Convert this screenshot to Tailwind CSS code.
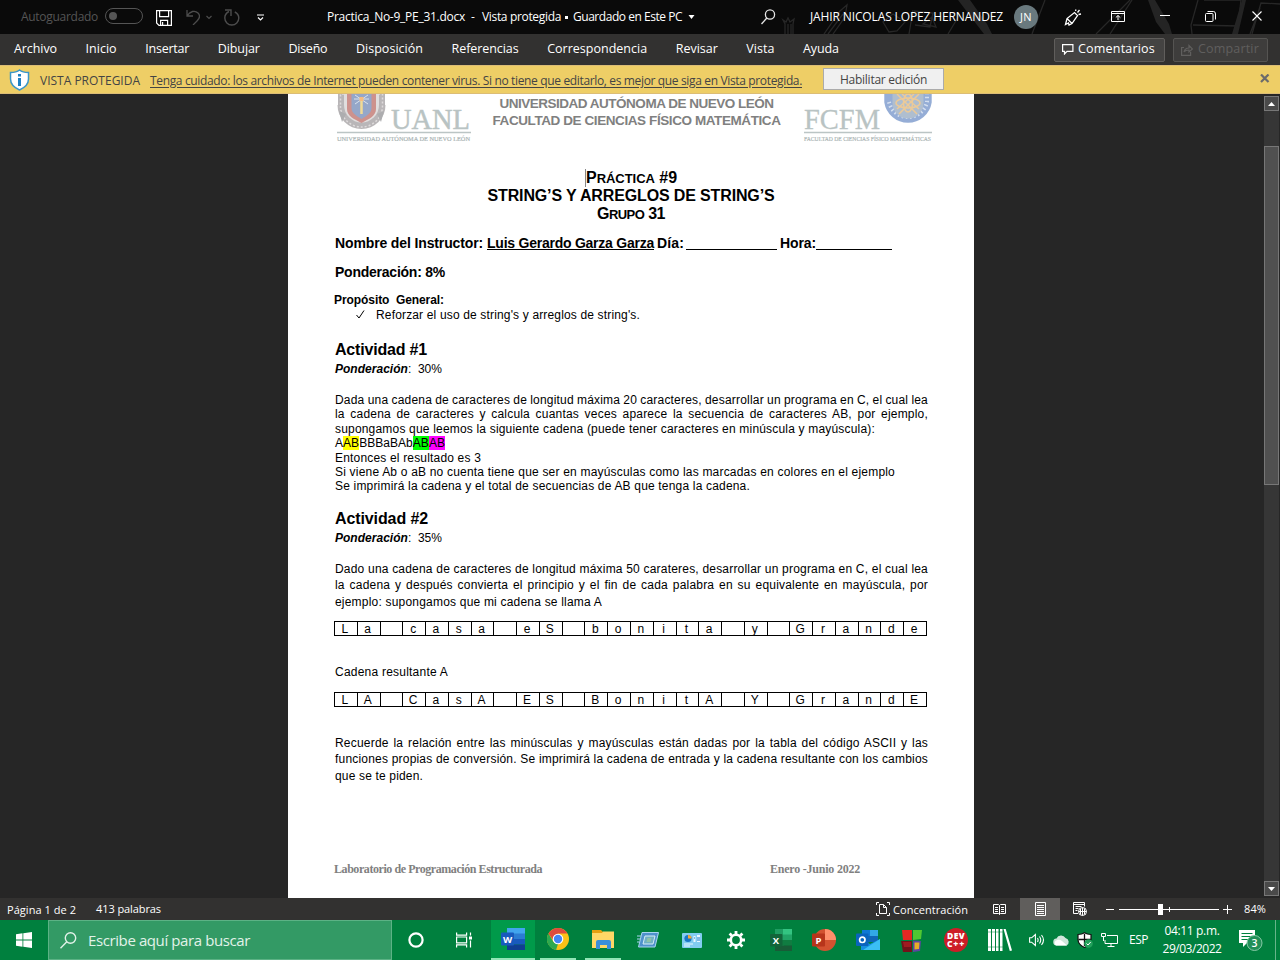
<!DOCTYPE html>
<html lang="es">
<head>
<meta charset="utf-8">
<title>Practica_No-9_PE_31.docx</title>
<script src="https://cdn.jsdelivr.net/npm/@tailwindcss/browser@4"></script>
</head>
<body class="w-[1280px] h-[960px] overflow-hidden flex flex-col bg-[#262626] font-['Open_Sans','Noto_Sans',sans-serif] text-[12px]">

<!-- Title bar -->
<header class="relative h-[34px] shrink-0 bg-[#0a0a0a] text-white flex items-center pl-[21px]">
  <svg class="absolute left-[770px] top-0" width="510" height="34" fill="none" stroke="#272727" stroke-width="1.3">
    <path d="M15 34v-10l-2-4 3 2 2-4 2 4 4-3-1 5v10M18 34v-10M21 34v-10M54 34l16-23 7-6-2 12-12 17M58 34l15-20M113 22l10-8 12 8-8 9-8 1zM143 10l-4 24M144 11l19 2-3 14-15-2M153 24l9-7 4 10zM178 34l12-20M275 0l-13 34M326 34l34-34M340 34l22-34M428 0l-7 25 1 9M434 0h37l-3 26-45-1M510 4l-19-1-9 31M490 8l-10 26"/>
    <path d="M188 0h12l17 24 5 10h-8l-7-9zM378 0h7l14 24 3 10h-7l-9-12zM472 0h4l-8 34h-6z" fill="#242424" stroke="none"/>
  </svg>
  <span class="text-[#555] whitespace-nowrap" data-w="77">Autoguardado</span>
  <div class="relative ml-[7px] w-[38px] h-4 -mt-[2px] rounded-full border border-[#555] flex items-center pl-[3px]"><div class="size-2 rounded-full bg-[#555]"></div></div>
  <svg class="ml-[13px] mt-[2px]" width="16" height="16" fill="none" stroke="#fff" stroke-width="1.2"><path d="M.6.6h14.8v14.8H3L.6 13zM3.600.6v6h9v-6M4.600 15.400v-5h7v5M6.600 12v3"/></svg>
  <svg class="ml-[14px]" width="14" height="16" fill="none" stroke="#4d4d4d" stroke-width="1.3"><path d="M1 1v6h6M1 7C4 2 9 1 12 4s1 6-1 8l-4 4"/></svg>
  <svg class="ml-[6px]" width="6" height="5" fill="none" stroke="#4d4d4d" stroke-width="1.2"><path d="M.5 1 3 3.500 5.500 1"/></svg>
  <svg class="ml-[12px]" width="16" height="17" fill="none" stroke="#4d4d4d" stroke-width="1.4"><path d="M1 1h6v6M5 2.500C2 4 .8 6 .8 9a7 7 0 0 0 14 0c0-3-1.800-5-4-6"/></svg>
  <svg class="ml-[17px]" width="8" height="7" fill="none" stroke="#fff" stroke-width="1.200"><path d="M0 1h7M1 3.500 3.500 6 6 3.500"/></svg>
  <span class="ml-[62px] whitespace-nowrap" data-w="138">Practica_No-9_PE_31.docx</span>
  <span class="ml-[6px]" data-w="4">-</span>
  <span class="ml-[7px] whitespace-nowrap" data-w="79">Vista protegida</span>
  <i class="ml-[4px] size-[3px] bg-white"></i>
  <span class="ml-[5px] whitespace-nowrap" data-w="109">Guardado en Este PC</span>
  <svg class="ml-[6px]" width="7" height="5" fill="#fff"><path d="M.5 0h6L3.500 4z"/></svg>
  <svg class="ml-[66px]" width="15" height="16" fill="none" stroke="#e6e6e6" stroke-width="1.300"><circle cx="9" cy="5.500" r="4.600"/><path d="M5.800 9 .5 15"/></svg>
  <span class="relative ml-[34px] whitespace-nowrap" data-w="193">JAHIR NICOLAS LOPEZ HERNANDEZ</span>
  <div class="relative ml-[11px] size-6 rounded-full bg-[#69797e] flex items-center justify-center text-[11px]"><span data-w="12">JN</span></div>
  <svg class="relative ml-[26px]" width="18" height="17" fill="none" stroke="#fff" stroke-width="1.300"><path d="M1.500 15.500 3 9.500l7.500-6 3 3-5.500 8-3 1.500-.5-2zM3 9.500l5 5M11.500 2l.5-1.500M13.500 3.500 15.500 1M14.500 5.500l2.500-.5"/></svg>
  <svg class="relative ml-[29px] -mt-[2px]" width="14" height="11" fill="none" stroke="#fff"><path d="M.5.5h13v10H.5zM.5 2.500h13M7 9V4.500M4.800 6.500 7 4.500l2.200 2"/></svg>
  <i class="relative ml-[35px] -mt-[3px] w-[10px] h-px bg-white"></i>
  <svg class="relative ml-[35px] -mt-[2px]" width="11" height="11" fill="none" stroke="#fff"><rect x=".5" y="2.500" width="7.500" height="8" rx="1"/><path d="M2.500.5h6Q10.500.5 10.500 3v5.500"/></svg>
  <svg class="relative ml-[36px] -mt-[2px]" width="10" height="10" stroke="#fff" stroke-width="1.100"><path d="m.5.5 9 9M9.500.5l-9 9"/></svg>
</header>

<!-- Ribbon tabs -->
<nav class="h-[31px] shrink-0 bg-[#323130] text-white text-[12.5px] flex items-center pl-[14px] whitespace-nowrap">
  <div class="flex gap-[28.6px]">
    <span data-w="43">Archivo</span><span data-w="31">Inicio</span><span data-w="44">Insertar</span><span data-w="42">Dibujar</span><span data-w="39">Diseño</span><span data-w="67">Disposición</span><span data-w="67">Referencias</span><span data-w="100">Correspondencia</span><span data-w="42">Revisar</span><span data-w="28">Vista</span><span data-w="36">Ayuda</span>
  </div>
  <div class="ml-auto mr-[12px] flex gap-[8px]">
    <div class="w-[111px] h-6 rounded-[2px] border border-[#605e5c] bg-[#444342] flex items-center pl-[7px]">
      <svg width="12" height="11" fill="none" stroke="#fff" stroke-width="1.200"><path d="M.6.6h10.300v6.800H5L2.500 10V7.400H.6z"/></svg>
      <span class="ml-[4px]" data-w="77">Comentarios</span>
    </div>
    <div class="w-[95px] h-6 rounded-[2px] border border-[#555452] bg-[#3e3d3c] text-[#605f5e] flex items-center pl-[7px]">
      <svg width="12" height="12" fill="none" stroke="#605f5e" stroke-width="1.200"><path d="M3 3.500H.6v7.900h9V8M3 8c.5-3 2.500-4 5-4V1.500L11.500 5 8 8V6C6 6 4 6.500 3 8z"/></svg>
      <span class="ml-[5px]" data-w="61">Compartir</span>
    </div>
  </div>
</nav>

<!-- Protected view bar -->
<div class="h-[29px] shrink-0 bg-[#eece66] border-y border-t-[#dcbd75] border-b-[#dcbd75] text-[#444] flex items-center pl-[9px] whitespace-nowrap">
  <svg width="21" height="22" viewBox="0 0 21 22"><path d="M10.500 1C8 3 5 3.500 1.500 3.500V10c0 5 3.500 8.500 9 11 5.500-2.500 9-6 9-11V3.500C16 3.500 13 3 10.500 1z" fill="#fff" stroke="#3a96c8" stroke-width="1.500"/><path d="M9 9h3v8H9zM9 5h3v2.500H9z" fill="#1e81c4"/></svg>
  <span class="ml-[10px] mt-[2px]" data-w="100">VISTA PROTEGIDA</span>
  <span class="ml-[10px] mt-[2px] underline underline-offset-2" data-w="652">Tenga cuidado: los archivos de Internet pueden contener virus. Si no tiene que editarlo, es mejor que siga en Vista protegida.</span>
  <div class="ml-[21px] w-[121px] h-[22px] -mt-[2px] pt-[2px] border border-[#ababab] bg-[#f0f0f0] flex items-center justify-center"><span data-w="87">Habilitar edición</span></div>
  <svg class="ml-auto mr-[10px] -mt-[2px]" width="10" height="9" stroke="#6b6b6b" stroke-width="2.200"><path d="m1 .5 7.500 7.500M8.500.5 1 8"/></svg>
</div>

<!-- Document workspace -->
<main class="h-[804px] shrink-0 flex overflow-hidden">
  <article class="ml-[288px] w-[686px] h-[804px] bg-white text-black font-['Liberation_Sans',Arial,sans-serif] pl-[47px] whitespace-nowrap text-[12px] leading-[14px]">
    <div class="flex h-[75px] text-[#808080] font-bold text-[13.500px] leading-[17px]">
      <svg width="137" height="58" class="opacity-60 overflow-visible" font-family="Liberation Serif, serif">
        <path d="M2.500 0A24 24 0 1 0 50.500 0z" transform="translate(0 11)" fill="#8c8789"/><path d="M3 0h47v12H3z" fill="#8c8789"/>
        <path d="M5.500 12a21 21 0 0 0 42 0V0h-42z" fill="none" stroke="#c9c4c5" stroke-dasharray="2 2" stroke-width="1.500"/>
        <path d="M9 0h35v11a17.500 17.500 0 0 1-35 0z" fill="#cdc9c9"/>
        <path d="M12 0h29v15c0 7-7 10-14.500 14C19 25 12 22 12 15z" fill="#ad4a43"/><path d="M16.500 0h20v14c0 5-5 8-10 11-5-3-10-6-10-11z" fill="#4f6ea6"/>
        <path d="M26.500 6v14" stroke="#e9c34c" stroke-width="2.500"/><path d="M20 1l13 9M33 1l-13 9M19 5h15" stroke="#c3cfe0"/><path d="M24.500 3h4v4h-4z" fill="#f0902f"/>
        <path d="m4 17 7 3-4 8zM49 17l-7 3 4 8z" fill="#77777b"/>
        <text x="56" y="35" font-size="30" font-weight="400" fill="#8b9c9c" stroke="#8b9c9c" stroke-width=".5" textLength="79" lengthAdjust="spacingAndGlyphs">UANL</text>
        <path d="M2 38.500h134" stroke="#8fa0a0" stroke-width="1.500"/>
        <text x="2" y="47" font-size="6.500" font-weight="400" fill="#708282" stroke="#708282" stroke-width=".2" textLength="133" lengthAdjust="spacingAndGlyphs">UNIVERSIDAD AUTÓNOMA DE NUEVO LEÓN</text>
      </svg>
      <div class="w-[331px] pt-[1px] flex flex-col items-center pr-[2px]"><span data-w="274">UNIVERSIDAD AUTÓNOMA DE NUEVO LEÓN</span><span data-w="288">FACULTAD DE CIENCIAS FÍSICO MATEMÁTICA</span></div>
      <svg width="131" height="58" class="opacity-60 overflow-visible" font-family="Liberation Serif, serif">
        <path d="M81.300 8.500V0h47.400v8.500a24 24 0 0 1-47.400 0z" fill="#4f78bb"/><path d="M86 8a19.500 19.500 0 0 0 38 0V0" fill="none" stroke="#b9cbe6" stroke-dasharray="1.500 2.500" stroke-width="4"/><path d="M89.500 0h31v9a15.500 15.500 0 0 1-31 0z" fill="#7b93b0"/>
        <g fill="none" stroke="#e0a855" stroke-width="1.500"><ellipse cx="105" cy="9" rx="4.500" ry="9"/><ellipse cx="105" cy="9" rx="12" ry="5"/><path d="M94 0l20 20M116 0 96 20M99 0l17 15M111 0 94 15"/></g>
        <text x="1" y="35" font-size="30" font-weight="400" fill="#8b9c9c" stroke="#8b9c9c" stroke-width=".3" textLength="76" lengthAdjust="spacingAndGlyphs">FCFM</text>
        <path d="M1 38.500h128" stroke="#8fa0a0" stroke-width="1.500"/>
        <text x="1" y="47" font-size="6.500" font-weight="400" fill="#708282" stroke="#708282" stroke-width=".2" textLength="127" lengthAdjust="spacingAndGlyphs">FACULTAD DE CIENCIAS FÍSICO MATEMÁTICAS</text>
      </svg>
    </div>
    <div class="w-[592px] flex flex-col items-center font-bold text-[16px] leading-[18px]">
      <div class="h-[18px] border-l border-[#888]"><span data-w="91">P<span class="text-[13px]">RÁCTICA</span> #9</span></div>
      <span data-w="287" class="h-[18px] font-bold">STRING’S Y ARREGLOS DE STRING’S</span>
      <div class="h-[18px]"><span data-w="68">G<span class="text-[13px]">RUPO</span> 31</span></div>
    </div>
    <div class="mt-[12px] h-4 flex text-[14px] leading-4 font-bold">
      <span data-w="148">Nombre del Instructor:</span><span class="ml-[4px] underline" data-w="167">Luis Gerardo Garza Garza</span><span class="ml-[3px]" data-w="27">Día:</span><i class="ml-[2px] w-[91px] h-[15px] border-b border-black"></i><span class="ml-[3px]" data-w="36">Hora:</span><i class="w-[76px] h-[15px] border-b border-black"></i>
    </div>
    <div class="mt-[13px] h-4 text-[14px] leading-4 font-bold"><span data-w="110">Ponderación: 8%</span></div>
    <div class="mt-[13px] h-[14px] -ml-px font-bold"><span data-w="110">Propósito&nbsp; General:</span></div>
    <div class="mt-px h-[14px] pl-[21px] flex"><svg class="mt-[2px]" width="9" height="9" fill="none" stroke="#000"><path d="m.5 5 2.500 3 5-7.500"/></svg><span class="ml-[11px]" data-w="264">Reforzar el uso de string's y arreglos de string's.</span></div>

    <div class="mt-[19px] h-[18px] text-[16px] leading-[18px] font-bold"><span data-w="92">Actividad #1</span></div>
    <div class="mt-[3px] h-[14px]"><span data-w="107"><b class="italic">Ponderación</b>:&nbsp; 30%</span></div>
    <div class="mt-[17px] h-[14px]"><span data-j="593">Dada una cadena de caracteres de longitud máxima 20 caracteres, desarrollar un programa en C, el cual lea</span></div>
    <div class="h-[14px]"><span data-j="593">la cadena de caracteres y calcula cuantas veces aparece la secuencia de caracteres AB, por ejemplo,</span></div>
    <div class="mt-px h-[14px]"><span data-w="540">supongamos que leemos la siguiente cadena (puede tener caracteres en minúscula y mayúscula):</span></div>
    <div class="h-[14px]"><span data-w="110">A<mark class="bg-[#ff0]">AB</mark>BBBaBAb<mark class="bg-[#0f0]">AB</mark><mark class="bg-[#f0f]">AB</mark></span></div>
    <div class="mt-px h-[14px]"><span data-w="146">Entonces el resultado es 3</span></div>
    <div class="h-[14px]"><span data-w="560">Si viene Ab o aB no cuenta tiene que ser en mayúsculas como las marcadas en colores en el ejemplo</span></div>
    <div class="h-[14px]"><span data-w="415">Se imprimirá la cadena y el total de secuencias de AB que tenga la cadena.</span></div>

    <div class="mt-[17px] h-[18px] text-[16px] leading-[18px] font-bold"><span data-w="93">Actividad #2</span></div>
    <div class="mt-[3px] h-[14px]"><span data-w="107"><b class="italic">Ponderación</b>:&nbsp; 35%</span></div>
    <div class="mt-[17px] h-[14px]"><span data-j="593">Dado una cadena de caracteres de longitud máxima 50 carateres, desarrollar un programa en C, el cual lea</span></div>
    <div class="mt-[2px] h-[14px]"><span data-j="593">la cadena y después convierta el principio y el fin de cada palabra en su equivalente en mayúscula, por</span></div>
    <div class="mt-[3px] h-[14px]"><span data-w="267">ejemplo: supongamos que mi cadena se llama A</span></div>
    <div class="mt-[12px] -ml-px w-[593px] h-[15px] grid grid-cols-[repeat(26,minmax(0,1fr))] border-y border-r border-black text-center leading-[14px] *:border-l *:border-black *:pr-[2px]">
      <i class="not-italic">L</i><i class="not-italic">a</i><i></i><i class="not-italic">c</i><i class="not-italic">a</i><i class="not-italic">s</i><i class="not-italic">a</i><i></i><i class="not-italic">e</i><i class="not-italic">S</i><i></i><i class="not-italic">b</i><i class="not-italic">o</i><i class="not-italic">n</i><i class="not-italic">i</i><i class="not-italic">t</i><i class="not-italic">a</i><i></i><i class="not-italic">y</i><i></i><i class="not-italic">G</i><i class="not-italic">r</i><i class="not-italic">a</i><i class="not-italic">n</i><i class="not-italic">d</i><i class="not-italic">e</i>
    </div>
    <div class="mt-[29px] h-[14px]"><span data-w="113">Cadena resultante A</span></div>
    <div class="mt-[13px] -ml-px w-[593px] h-[15px] grid grid-cols-[repeat(26,minmax(0,1fr))] border-y border-r border-black text-center leading-[14px] *:border-l *:border-black *:pr-[2px]">
      <i class="not-italic">L</i><i class="not-italic">A</i><i></i><i class="not-italic">C</i><i class="not-italic">a</i><i class="not-italic">s</i><i class="not-italic">A</i><i></i><i class="not-italic">E</i><i class="not-italic">S</i><i></i><i class="not-italic">B</i><i class="not-italic">o</i><i class="not-italic">n</i><i class="not-italic">i</i><i class="not-italic">t</i><i class="not-italic">A</i><i></i><i class="not-italic">Y</i><i></i><i class="not-italic">G</i><i class="not-italic">r</i><i class="not-italic">a</i><i class="not-italic">n</i><i class="not-italic">d</i><i class="not-italic">E</i>
    </div>
    <div class="mt-[29px] h-[14px]"><span data-j="593">Recuerde la relación entre las minúsculas y mayúsculas están dadas por la tabla del código ASCII y las</span></div>
    <div class="mt-[2px] h-[14px]"><span data-j="593">funciones propias de conversión. Se imprimirá la cadena de entrada y la cadena resultante con los cambios</span></div>
    <div class="mt-[3px] h-[14px]"><span data-w="88">que se te piden.</span></div>
    <div class="mt-[79px] -ml-px flex font-bold text-[#808080] font-['Liberation_Serif','Times_New_Roman',serif]"><span data-w="208">Laboratorio de Programación Estructurada</span><span class="ml-[228px]" data-w="90">Enero -Junio 2022</span></div>
  </article>

  <div class="ml-auto mr-px mt-[2px] mb-[2px] w-[15px] flex flex-col bg-[#363636]">
    <div class="h-[15px] border border-[#777] bg-[#4a4a4a] flex items-center justify-center"><svg width="7" height="4" fill="#fff"><path d="M0 4h7L3.500 0z"/></svg></div>
    <div class="mt-[35px] h-[339px] border border-[#777] bg-[#505050]"></div>
    <div class="mt-auto h-[15px] border border-[#777] bg-[#4a4a4a] flex items-center justify-center"><svg width="7" height="4" fill="#fff"><path d="M0 0h7L3.500 4z"/></svg></div>
  </div>
</main>

<!-- Word status bar -->
<div class="h-[22px] shrink-0 bg-[#323130] text-white text-[11px] flex items-center pl-[7px] whitespace-nowrap">
  <span class="mt-[2px]" data-w="69">Página 1 de 2</span><span class="ml-[20px]" data-w="65">413 palabras</span>
  <svg class="ml-[715px]" width="14" height="14" fill="none" stroke="#fff"><path d="M3 .5H.5V3M11 .5h2.500V3M.5 11v2.500H3M13.500 11v2.500H11M3.500 2.500h4l3 3v6h-7zM7.500 2.500v3h3"/></svg>
  <span class="ml-[3px] mt-[2px]" data-w="75">Concentración</span>
  <svg class="ml-[25px]" width="13" height="13" fill="none" stroke="#fff"><path d="M.5 1.500h5l1 1 1-1h5v9h-5l-1 1-1-1h-5zM6.500 2.500v9M2 4.500h3M2 6.500h3M2 8.500h3M8 4.500h3M8 6.500h3M8 8.500h3"/></svg>
  <div class="ml-[14px] w-10 h-[22px] bg-[#605e5c] flex items-center justify-center"><svg width="11" height="14" fill="none" stroke="#fff"><path d="M.5.5h10v13H.5zM2 3.500h7M2 5.500h7M2 7.500h7M2 9.500h7M2 11.500h7"/></svg></div>
  <svg class="ml-[13px]" width="14" height="14" fill="none" stroke="#fff"><path d="M5 11.500H.5V.5h11v4M.5 2.500h11M2.500 4.500h6M2.500 6.500h3M2.500 8.500h2"/><circle cx="9.500" cy="9.500" r="4"/><path d="M5.500 9.500h8M9.500 5.500v8M7.500 6.500v6M11.500 6.500v6"/></svg>
  <i class="ml-[19px] w-2 h-px bg-white"></i>
  <svg class="ml-[5px]" width="100" height="11" fill="#fff"><path d="M0 5h100v1H0zM39 0h5v11h-5zM50 3h1v5h-1z"/></svg>
  <svg class="ml-[4px]" width="9" height="9" stroke="#fff"><path d="M0 4.500h9M4.500 0v9"/></svg>
  <span class="ml-[12px]" data-w="22">84%</span>
</div>

<!-- Windows taskbar -->
<footer class="h-10 shrink-0 bg-[#00803e] text-white flex items-center whitespace-nowrap">
  <svg class="ml-[16px]" width="16" height="16" fill="#fff"><path d="M0 2.300 6.500 1.300V7.500H0zM7.300 1.200 16 0v7.500H7.300zM0 8.400h6.500v6.300L0 13.700zM7.300 8.400H16V16l-8.700-1.200z"/></svg>
  <div class="ml-[16px] w-[344px] h-10 border border-[#5cb285] bg-[#339a65] flex items-center pl-[11px] text-[15px] text-[#e2f2e9]">
    <svg width="17" height="17" fill="none" stroke="#e2f2e9" stroke-width="1.400"><circle cx="10.500" cy="6" r="5.200"/><path d="M6.800 9.800.5 16.200"/></svg>
    <span class="ml-[11px]" data-w="162">Escribe aquí para buscar</span>
  </div>
  <svg class="ml-[16px]" width="16" height="16" fill="none" stroke="#fff" stroke-width="2.200"><circle cx="8" cy="8" r="6.600"/></svg>
  <svg class="ml-[32px]" width="16" height="16" fill="none" stroke="#fff" stroke-width="1.200"><path d="M.6.5v2.600h10V.5M.6 15.500v-2.600h10v2.600M.6 5h10v5.800H.6zM14.500.5v3M14.500 8.500v7"/><path d="M13 4.500h3v3h-3z" fill="#fff" stroke="none"/></svg>
  <div class="ml-[19px] w-11 h-10 bg-[#009a4a] border-b-2 border-[#92e5b6] flex items-center justify-center">
    <svg width="24" height="22"><path d="M6 0h18v6H6z" fill="#41a5ee"/><path d="M6 5.500h18V11H6z" fill="#2b7cd3"/><path d="M6 11h18v5.500H6z" fill="#185abd"/><path d="M6 16.500h18V22H6z" fill="#103f91"/><rect y="4.500" width="13" height="13" rx="1" fill="#185abd"/><text x="6.500" y="14.500" font-family="Open Sans" font-size="9.500" font-weight="700" fill="#fff" text-anchor="middle">W</text></svg>
  </div>
  <div class="ml-[5px] w-9 h-10 border-b-2 border-[#92e5b6] flex items-center justify-center">
    <svg width="22" height="22"><circle cx="11" cy="11" r="11" fill="#fbc116"/><path d="M1.500 5.500 6.500 14 11 16l-2 6A11 11 0 0 1 1.500 5.500z" fill="#2da94f"/><path d="M1.500 5.500A11 11 0 0 1 20.500 5.500H11L6 12z" fill="#dd4b3e"/><circle cx="11" cy="11" r="5.300" fill="#fff"/><circle cx="11" cy="11" r="4.200" fill="#4285f4"/></svg>
  </div>
  <div class="ml-[9px] w-9 h-10 border-b-2 border-[#92e5b6] flex items-center justify-center">
    <svg width="22" height="19"><path d="M0 0h9l2 2v5H0z" fill="#e6a010"/><path d="M0 3h10l1-1.500h11V18H0z" fill="#ffd766"/><path d="M4 19v-7q0-2 2-2h11q2 0 2 2v7h-4v-4H8v4z" fill="#3a8fd9"/></svg>
  </div>
  <svg class="ml-[16px]" width="22" height="16"><path d="M5 .5h16.500L18 15H1.500z" fill="#4f91cc" stroke="#a9d5f1"/><path d="M8 4h10l-2 8H6z" fill="#6fb0c4" stroke="#d6edf8"/><path d="M10.500 6h4l-1 4h-4z" fill="#8fc3a9"/><path d="M0 4h4M0 7h3M0 10h2" stroke="#a9d5f1"/></svg>
  <svg class="ml-[23px]" width="20" height="15"><rect width="20" height="15" rx="1" fill="#82cdf1"/><circle cx="6" cy="5.500" r="3.600" fill="#1976c6"/><path d="M6 5.500V1.900a3.600 3.600 0 0 1 3.600 3.600z" fill="#f7a834"/><path d="M11.500 3h2v6h-2zM15 2h3v7h-3z" fill="#e9f8ff"/><path d="M2 11h9M2 13h6" stroke="#eaf8ff"/><path d="M12 5h1M15 5h3M15 7h3" stroke="#1976c6"/></svg>
  <svg class="ml-[25px]" width="18" height="18" fill="none" stroke="#fff"><circle cx="9" cy="9" r="5.200" stroke-width="2.600"/><path d="M9 0v3M9 15v3M0 9h3M15 9h3M2.600 2.600l2.200 2.200M13.200 13.200l2.200 2.200M2.600 15.400l2.200-2.200M13.200 4.800l2.200-2.200" stroke-width="2.800"/></svg>
  <svg class="ml-[25px]" width="22" height="22"><path d="M5 0h9v22H5z" fill="#1f9d62"/><path d="M13 0h9v6h-9z" fill="#33c481"/><path d="M13 5.500h9V11h-9z" fill="#21a366"/><path d="M5 11h9v5.500H5z" fill="#107c41"/><path d="M13 11h9v5.500h-9z" fill="#107c41"/><path d="M5 16.500h17V22H5z" fill="#185c37"/><rect y="5" width="12.500" height="12.500" rx="1" fill="#12653a"/><text x="6" y="15" font-family="Open Sans" font-size="9.500" font-weight="700" fill="#fff" text-anchor="middle">X</text></svg>
  <svg class="ml-[20px]" width="24" height="22"><circle cx="13" cy="11" r="11" fill="#d35230"/><path d="M13 0a11 11 0 0 1 11 11H13z" fill="#ff8f6b"/><rect y="4.500" width="13" height="13" rx="1" fill="#b7351b"/><text x="6.500" y="14.500" font-family="Open Sans" font-size="9.500" font-weight="700" fill="#fff" text-anchor="middle">P</text></svg>
  <svg class="ml-[20px]" width="24" height="22"><path d="M6 1h16v12H6z" fill="#1067b8"/><path d="M6 1h8v6H6z" fill="#0f78d4"/><path d="M14 1h8v6h-8z" fill="#32a9e7"/><path d="M5 10l9 5 10-5v11H5z" fill="#1490df"/><path d="M24 10 7 21h17z" fill="#50d9ff" opacity=".65"/><rect y="4.500" width="12.500" height="12.500" rx="1" fill="#0a64bd"/><circle cx="6.300" cy="10.800" r="2.700" fill="none" stroke="#fff" stroke-width="1.700"/></svg>
  <svg class="ml-[20px]" width="24" height="23"><path d="M2 1h10v10H3z" fill="#e52823"/><path d="M13 1h9l-1 9-8 1z" fill="#50c832"/><path d="M1 12h11v11H3z" fill="#721319"/><path d="M3 13h8v5H4z" fill="#a01b20"/><path d="M13 11.500l8 .5-1 10-7 1z" fill="#5b45a0"/><path d="M14.500 13.500h5l-.5 6.500-4.500.5z" fill="#e9ad28"/></svg>
  <div class="ml-[20px] size-6 rounded-full bg-[#cd1d27] flex flex-col items-center justify-center text-[8.5px] leading-[8px] font-extrabold"><span data-w="18">DEV</span><span data-w="18">C++</span></div>
  <svg class="ml-[20px]" width="24" height="24" fill="#fff"><path d="M0 1h3v22H0zM4 1h3v22H4zM8 1h2.500v22H8zM12 1h2.500v22H12zM15.500 1h2.200L24 22.500l-2.200.5z"/><path d="M0 4h15M0 19h15" stroke="#00803e" stroke-width=".5"/></svg>
  <svg class="ml-[17px]" width="16" height="14" fill="none" stroke="#fff" stroke-width="1.100"><path d="M.6 4.800h2L6.400 1.500v11L2.600 9.200h-2zM8.500 5q1.200 2 0 4M10.500 3.500q2.500 3.500 0 7M12.500 2q4 5 0 10"/></svg>
  <svg class="ml-[8px]" width="17" height="11" fill="#fff"><path d="M4 10.500a3.500 3.500 0 0 1-.5-7 5 5 0 0 1 9-.5 4 4 0 0 1 1 7.500z" fill="#cfe6db"/><path d="M3 10.500a3 3 0 0 1 0-5q3-1.500 6 .5l5 4.500z"/></svg>
  <svg class="ml-[7px]" width="16" height="16"><path d="M7.500.8Q5 2.500 1 2.500v5q0 5 6.500 8 6.500-3 6.500-8v-5q-4 0-6.500-1.700z" fill="#fff" stroke="#111" stroke-width="1.200"/><path d="M7.500 2v12M1.500 7.500H14" stroke="#111" stroke-width="1.300"/><circle cx="11.500" cy="11.500" r="4.300" fill="#22a05b"/><path d="m9.500 11.500 1.500 1.500 2.700-3" fill="none" stroke="#fff"/></svg>
  <svg class="ml-[8px]" width="17" height="14" fill="none" stroke="#fff"><path d="M6 2.500h10.500v8H4V7M10 10.500v3M6.500 13.500h7M.5.500h4v3h-4zM2.500 3.500V8"/></svg>
  <span class="ml-[11px] text-[12px]" data-w="19">ESP</span>
  <div class="ml-[14px] w-[60px] flex flex-col items-center text-[12px] leading-[18px]"><span data-w="55">04:11 p.m.</span><span data-w="59">29/03/2022</span></div>
  <svg class="ml-[17px]" width="25" height="22"><path d="M0 1h16v13H8l-4 4v-4H0z" fill="#fff"/><path d="M2.500 4.500h11M2.500 7.500h11M2.500 10.500h7" stroke="#00803e"/><circle cx="15.500" cy="14" r="7.500" fill="#218f58" stroke="#86c9a5"/><text x="15.500" y="18" font-family="Open Sans" font-size="10.500" font-weight="600" fill="#fff" text-anchor="middle">3</text></svg>
  <i class="ml-auto mr-[4px] w-px h-10 bg-[#67b48a]"></i>
</footer>

<script>
// Sets tracking (data-w) or word spacing (data-j) so that every line fills its measure.
function fit() {
  document.querySelectorAll('[data-w],[data-j]').forEach(el => {
    el.style.display = 'inline-block';
    el.style.whiteSpace = 'nowrap';
    el.style.flexShrink = 0;
    el.style.letterSpacing = '0px';
    el.style.wordSpacing = '0px';
    const natural = el.getBoundingClientRect().width;
    const text = el.textContent;
    if (el.dataset.j) {
      const gap = (el.dataset.j - natural) - text.length * 0.2;
      el.style.letterSpacing = '0.2px';
      el.style.wordSpacing = gap / (text.split(' ').length - 1) + 'px';
    } else {
      el.style.letterSpacing = (el.dataset.w - natural) / text.length + 'px';
    }
  });
}
fit();
window.addEventListener('load', () => { fit(); requestAnimationFrame(fit); });
document.fonts.ready.then(fit);
new ResizeObserver(fit).observe(document.querySelector('article'));
</script>
</body>
</html>
